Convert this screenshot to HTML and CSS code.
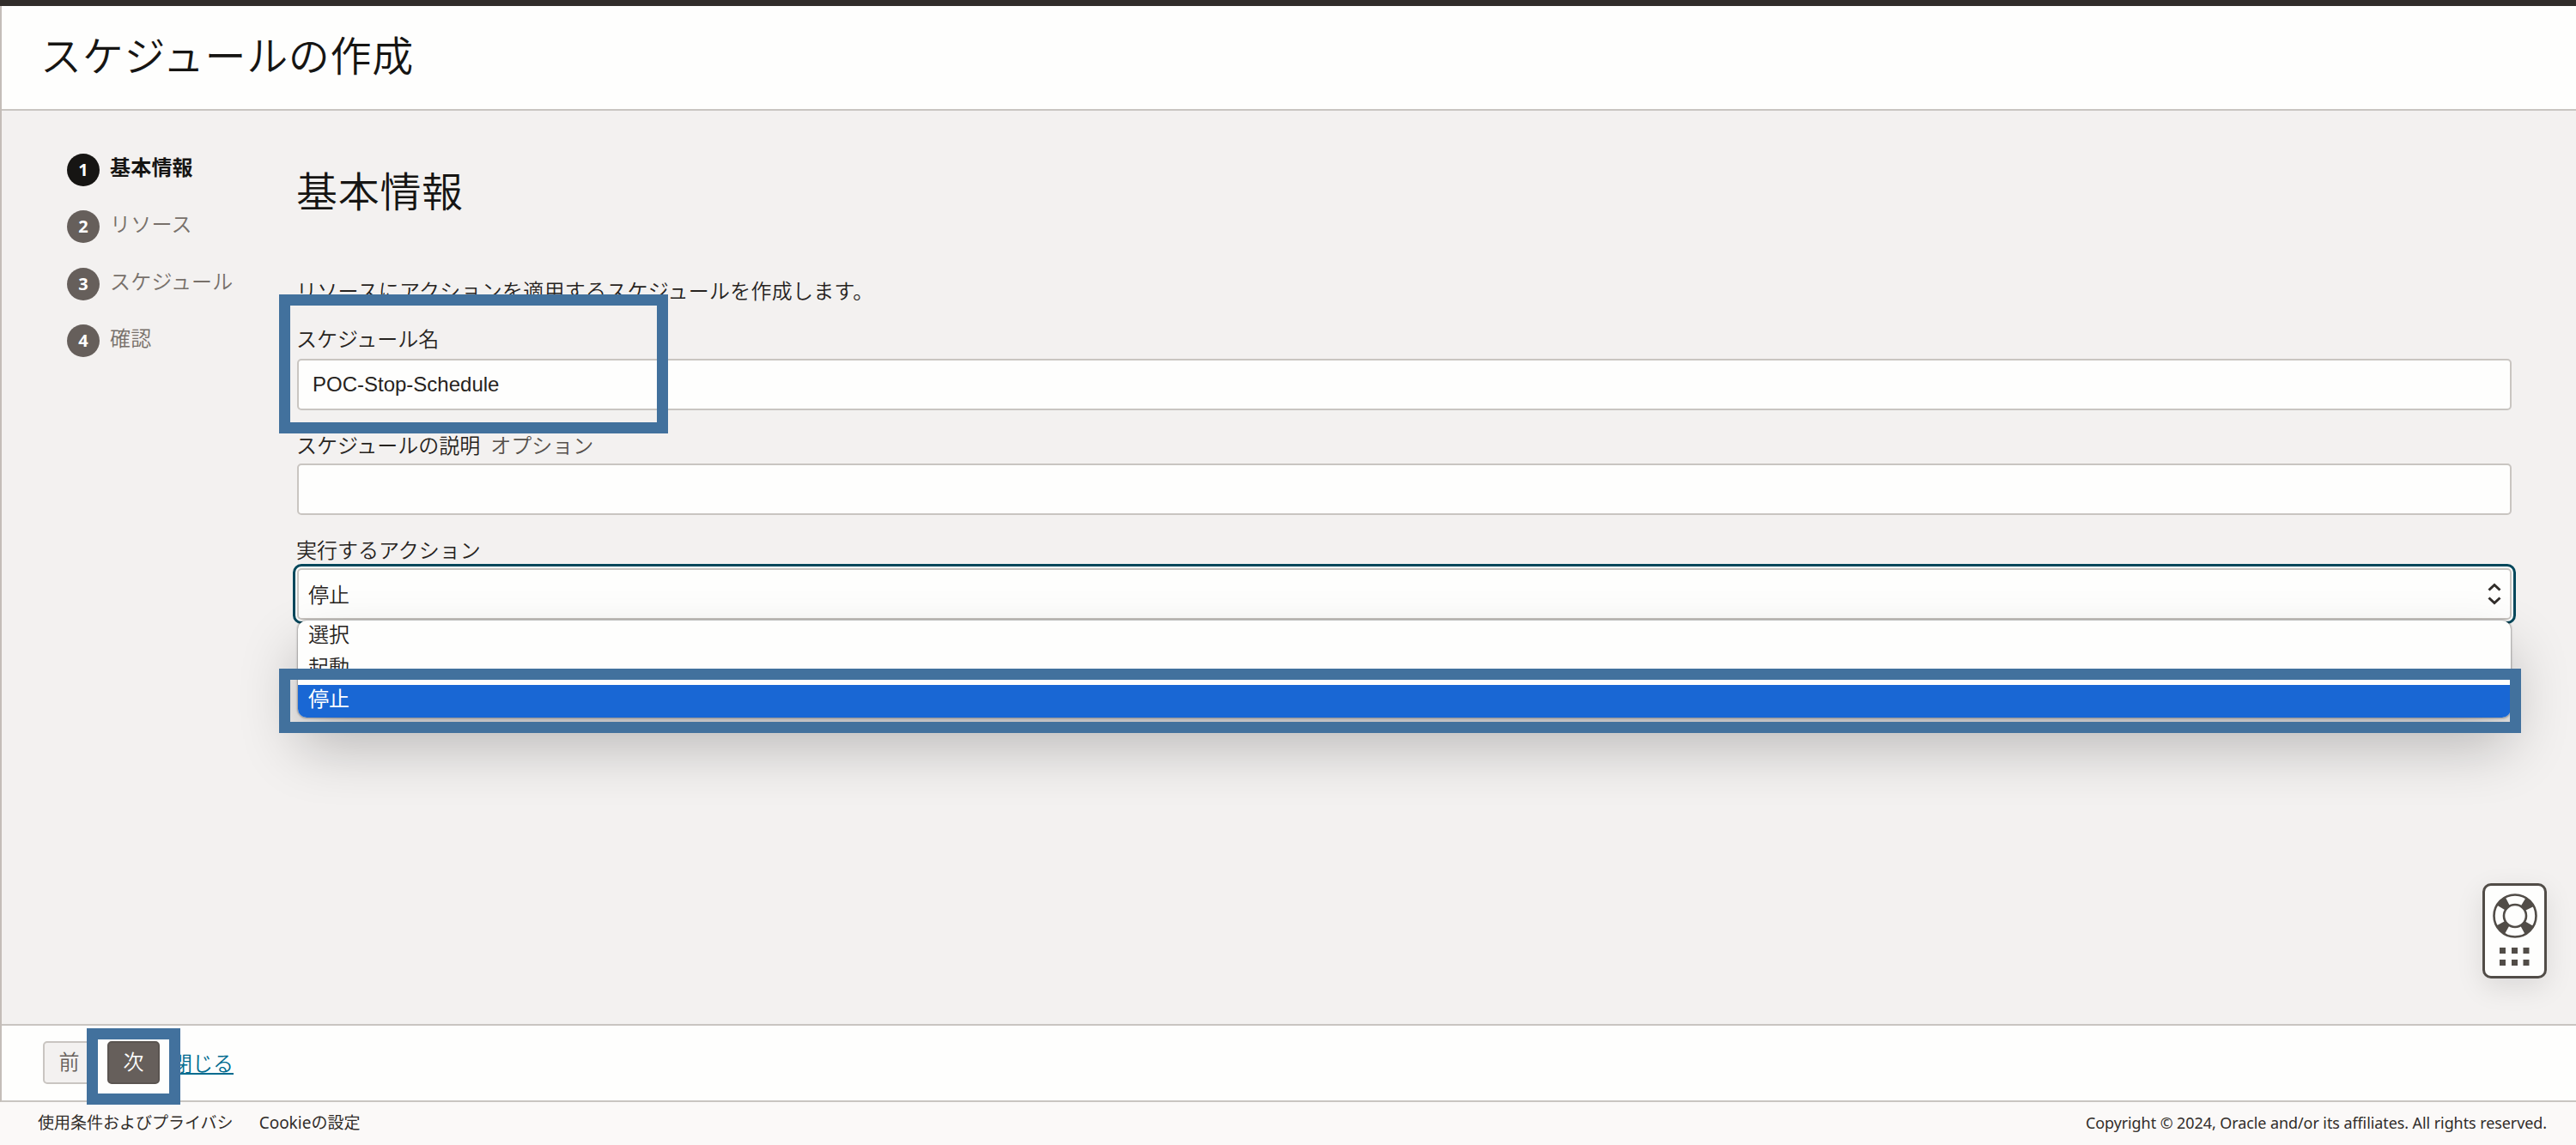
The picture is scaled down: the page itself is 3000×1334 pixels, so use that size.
FILE: index.html
```html
<!DOCTYPE html>
<html lang="ja">
<head>
<meta charset="utf-8">
<title>スケジュールの作成</title>
<link rel="stylesheet" href="styles.css">
</head>
<body>
<div class="page">
  <div class="panel">
    <header class="header"><h1 class="title">スケジュールの作成</h1></header>
    <main class="main">
      <ol class="steps">
        <li class="step step-active"><span class="step-num">1</span><span class="step-label">基本情報</span></li>
        <li class="step"><span class="step-num">2</span><span class="step-label">リソース</span></li>
        <li class="step"><span class="step-num">3</span><span class="step-label">スケジュール</span></li>
        <li class="step"><span class="step-num">4</span><span class="step-label">確認</span></li>
      </ol>
      <form class="form">
        <h2 class="section-title">基本情報</h2>
        <p class="intro">リソースにアクションを適用するスケジュールを作成します。</p>
        <div class="field field-name">
          <label class="label">スケジュール名</label>
          <div class="input">POC-Stop-Schedule</div>
        </div>
        <div class="field">
          <label class="label">スケジュールの説明<span class="optional">オプション</span></label>
          <div class="input"></div>
        </div>
        <div class="field">
          <label class="label">実行するアクション</label>
          <div class="select">
            <span>停止</span>
            <svg class="select-icon" viewBox="0 0 16 26" fill="none" stroke="#312d2a" stroke-width="3"><path d="M1.500 8.500 8 2.500l6.500 6M1.500 17.500 8 23.500l6.500-6"/></svg>
            <ul class="options">
              <li class="option">選択</li>
              <li class="option">起動</li>
              <li class="option option-selected">停止</li>
            </ul>
          </div>
        </div>
      </form>
    </main>
    <div class="actions">
      <button class="btn">前</button>
      <button class="btn btn-primary">次</button>
      <a class="link">閉じる</a>
    </div>
  </div>
  <footer class="footer">
    <div class="footer-links"><span>使用条件およびプライバシ</span><span>Cookieの設定</span></div>
    <span class="copyright">Copyright © 2024, Oracle and/or its affiliates. All rights reserved.</span>
  </footer>
  <div class="help">
    <svg viewBox="0 0 69 105" width="69" height="105">
      <g fill="none" stroke="#514c47">
        <circle cx="35" cy="35" r="19" stroke-width="12" stroke-dasharray="10.500 19.345" stroke-dashoffset="-9.670"/>
        <circle cx="35" cy="35" r="24.500" stroke-width="2.600"/>
        <circle cx="35" cy="35" r="13" stroke-width="2.600"/>
      </g>
      <path fill="#514c47" d="M17 72h7v7h-7zM31 72h7v7h-7zM44.500 72h7v7h-7zM17 86h7v7h-7zM31 86h7v7h-7zM44.500 86h7v7h-7z"/>
    </svg>
  </div>
  <div class="mark mark-name"></div>
  <div class="mark mark-option"></div>
  <div class="mark mark-next"></div>
</div>
</body>
</html>
```
FILE: styles.css
```css
* { box-sizing: border-box; }
body {
  margin: 0;
  font: 350 24px/36px "Noto Sans CJK JP", sans-serif;
  color: #262320;
}
h1, h2, p, ul, ol { margin: 0; padding: 0; list-style: none; }
.page {
  position: relative;
  width: 3000px;
  height: 1334px;
  overflow: hidden;
  display: flex;
  flex-direction: column;
  background: #fbf9f8;
  border-top: 7px solid #312d2a;
}
.panel {
  height: 1277px;
  display: flex;
  flex-direction: column;
  border-left: 2px solid #c4bdb8;
  border-bottom: 2px solid #c9c5c1;
  background: #fefefd;
}
.header {
  height: 122px;
  padding: 19px 0 0 45px;
  border-bottom: 2px solid #c9c5c1;
}
.title, .section-title {
  font-size: 48px;
  line-height: 72px;
  font-weight: 350;
  letter-spacing: .7px;
  color: #161513;
}
.main {
  flex: 1;
  display: flex;
  background: #f3f1f0;
}
.steps {
  width: 344px;
  padding: 50px 0 0 76px;
}
.step {
  display: flex;
  align-items: center;
  gap: 12px;
  height: 37px;
  margin-bottom: 29.600px;
  color: #77706a;
  letter-spacing: .2px;
}
.step-label { margin-top: -8px; }
.step-num {
  width: 38px;
  height: 38px;
  border-radius: 50%;
  background: #665f5b;
  color: #fff;
  font: bold 20px/37px "Noto Sans", sans-serif;
  text-align: center;
}
.step-active { color: #161513; font-weight: 700; }
.step-active .step-num { background: #161513; }
.form {
  width: 2579px;
  padding-top: 55px;
}
.section-title { margin: 0 0 64px -1px; }
.intro { margin: 0 0 20px -1px; letter-spacing: .25px; }
.field { margin-bottom: 22px; }
.label { display: block; margin-left: -1px; }
.optional { margin-left: 12px; color: #55504b; }
.input, .select {
  height: 60px;
  border: 2px solid #c9c5c1;
  border-radius: 5px;
  background: #fefefd;
}
.label + .input, .label + .select { margin-top: 4px; }
.field-name .label + .input { margin-top: 6px; }
.input {
  padding-left: 16px;
  font: 24px/55px "Liberation Sans", Arial, sans-serif;
}
.select {
  position: relative;
  display: flex;
  align-items: center;
  justify-content: space-between;
  padding: 0 10px 0 11px;
  line-height: 34px;
  outline: 3px solid #00475b;
  outline-offset: 2px;
  box-shadow: 0 0 0 2px #fefefd;
}
.select-icon { width: 16px; height: 26px; }
.options {
  position: absolute;
  left: -1px;
  right: -1px;
  top: 59px;
  height: 113px;
  border-radius: 10px;
  overflow: hidden;
  background: #fefefd;
  box-shadow: 0 0 2px 1px rgba(0,0,0,.3), 0 34px 68px rgba(0,0,0,.24);
}
.option { height: 37.500px; padding-left: 12px; line-height: 29px; }
.option-selected { background: #1967d4; color: #fff; font-weight: 400; }
.actions {
  height: 89px;
  display: flex;
  align-items: center;
  padding: 0 0 1px 48px;
  border-top: 2px solid #c9c5c1;
}
.btn {
  width: 61px;
  height: 50px;
  margin-right: 14px;
  padding: 0 0 4px;
  border: 2px solid #c9c5c1;
  border-radius: 5px;
  background: #f3f1f0;
  color: #665f5b;
  font: inherit;
}
.btn-primary { background: #665f5b; border-color: #5a5450; color: #fff; }
.link { color: #006b8f; text-decoration: underline; }
.footer {
  flex: 1;
  display: flex;
  justify-content: space-between;
  align-items: center;
  padding: 0 34px 2px 44px;
  font-size: 19px;
  line-height: 28px;
  color: #312d2a;
}
.footer-links { display: flex; gap: 30px; }
.footer-links, .copyright { font-family: "Noto Sans", "Noto Sans CJK JP", sans-serif; font-weight: 400; }
.copyright { font-size: 18px; letter-spacing: -.09px; }
.help {
  position: absolute;
  left: 2891px;
  top: 1022px;
  width: 75px;
  height: 111px;
  border: 3px solid #514c47;
  border-radius: 10px;
  background: #fefefd;
  box-shadow: 0 10px 32px rgba(0,0,0,.1);
}
.help svg { display: block; }
.mark { position: absolute; border: 13px solid #42719d; }
.mark-name { left: 325px; top: 336px; width: 453px; height: 162px; }
.mark-option { left: 325px; top: 772px; width: 2611px; height: 75px; }
.mark-next { left: 101px; top: 1191px; width: 109px; height: 89px; }
```
